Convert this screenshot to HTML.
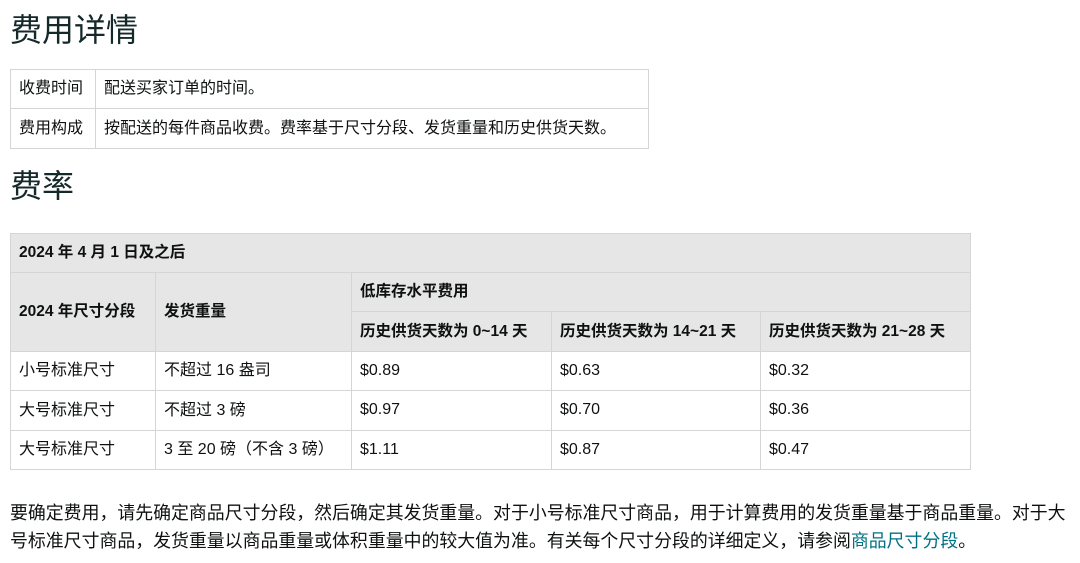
<!DOCTYPE html>
<html><head><meta charset="utf-8"><style>
body{margin:0;background:#fff;font-family:"Liberation Sans","Noto Sans CJK SC",sans-serif;color:#0f1111;font-size:16px;width:1080px;height:563px;overflow:hidden;position:relative}
h1{position:absolute;margin:0;font-weight:normal;font-size:32px;color:#15292b;left:10px;line-height:40px}
table{position:absolute;border-collapse:collapse;left:10px;table-layout:fixed}
td,th{border:1px solid #d5d5d5;padding:0 8px;text-align:left;font-size:16px;white-space:nowrap;line-height:20px;vertical-align:middle}
td span,th span{display:inline-block;vertical-align:middle}
th{background:#e6e6e6;font-weight:bold;font-size:15.5px}
p{position:absolute;margin:0;left:10px;top:499px;width:1075px;line-height:28px;font-size:17.9px;white-space:nowrap}
a{color:#007185;text-decoration:none}
</style></head><body>
<h1 style="top:10px">费用详情</h1>
<table style="top:69px;width:639px">
<col style="width:85px"><col>
<tr style="height:39px"><td>收费时间</td><td>配送买家订单的时间。</td></tr>
<tr style="height:40px"><td>费用构成</td><td>按配送的每件商品收费。费率基于尺寸分段、发货重量和历史供货天数。</td></tr>
</table>
<h1 style="top:166px">费率</h1>
<table style="top:233px;width:960px">
<col style="width:145px"><col style="width:196px"><col style="width:200px"><col style="width:209px"><col style="width:210px">
<tr style="height:39px"><th colspan="5">2024 年 4 月 1 日及之后</th></tr>
<tr style="height:39px"><th rowspan="2">2024 年尺寸分段</th><th rowspan="2">发货重量</th><th colspan="3">低库存水平费用</th></tr>
<tr style="height:40px"><th>历史供货天数为 0~14 天</th><th>历史供货天数为 14~21 天</th><th>历史供货天数为 21~28 天</th></tr>
<tr style="height:39px"><td>小号标准尺寸</td><td>不超过 16 盎司</td><td><span>$0.89</span></td><td><span>$0.63</span></td><td><span>$0.32</span></td></tr>
<tr style="height:40px"><td>大号标准尺寸</td><td>不超过 3 磅</td><td><span>$0.97</span></td><td><span>$0.70</span></td><td><span>$0.36</span></td></tr>
<tr style="height:39px"><td>大号标准尺寸</td><td>3 至 20 磅（不含 3 磅）</td><td><span>$1.11</span></td><td><span>$0.87</span></td><td><span>$0.47</span></td></tr>
</table>
<p>要确定费用，请先确定商品尺寸分段，然后确定其发货重量。对于小号标准尺寸商品，用于计算费用的发货重量基于商品重量。对于大<br>号标准尺寸商品，发货重量以商品重量或体积重量中的较大值为准。有关每个尺寸分段的详细定义，请参阅<a>商品尺寸分段</a>。</p>
</body></html>
